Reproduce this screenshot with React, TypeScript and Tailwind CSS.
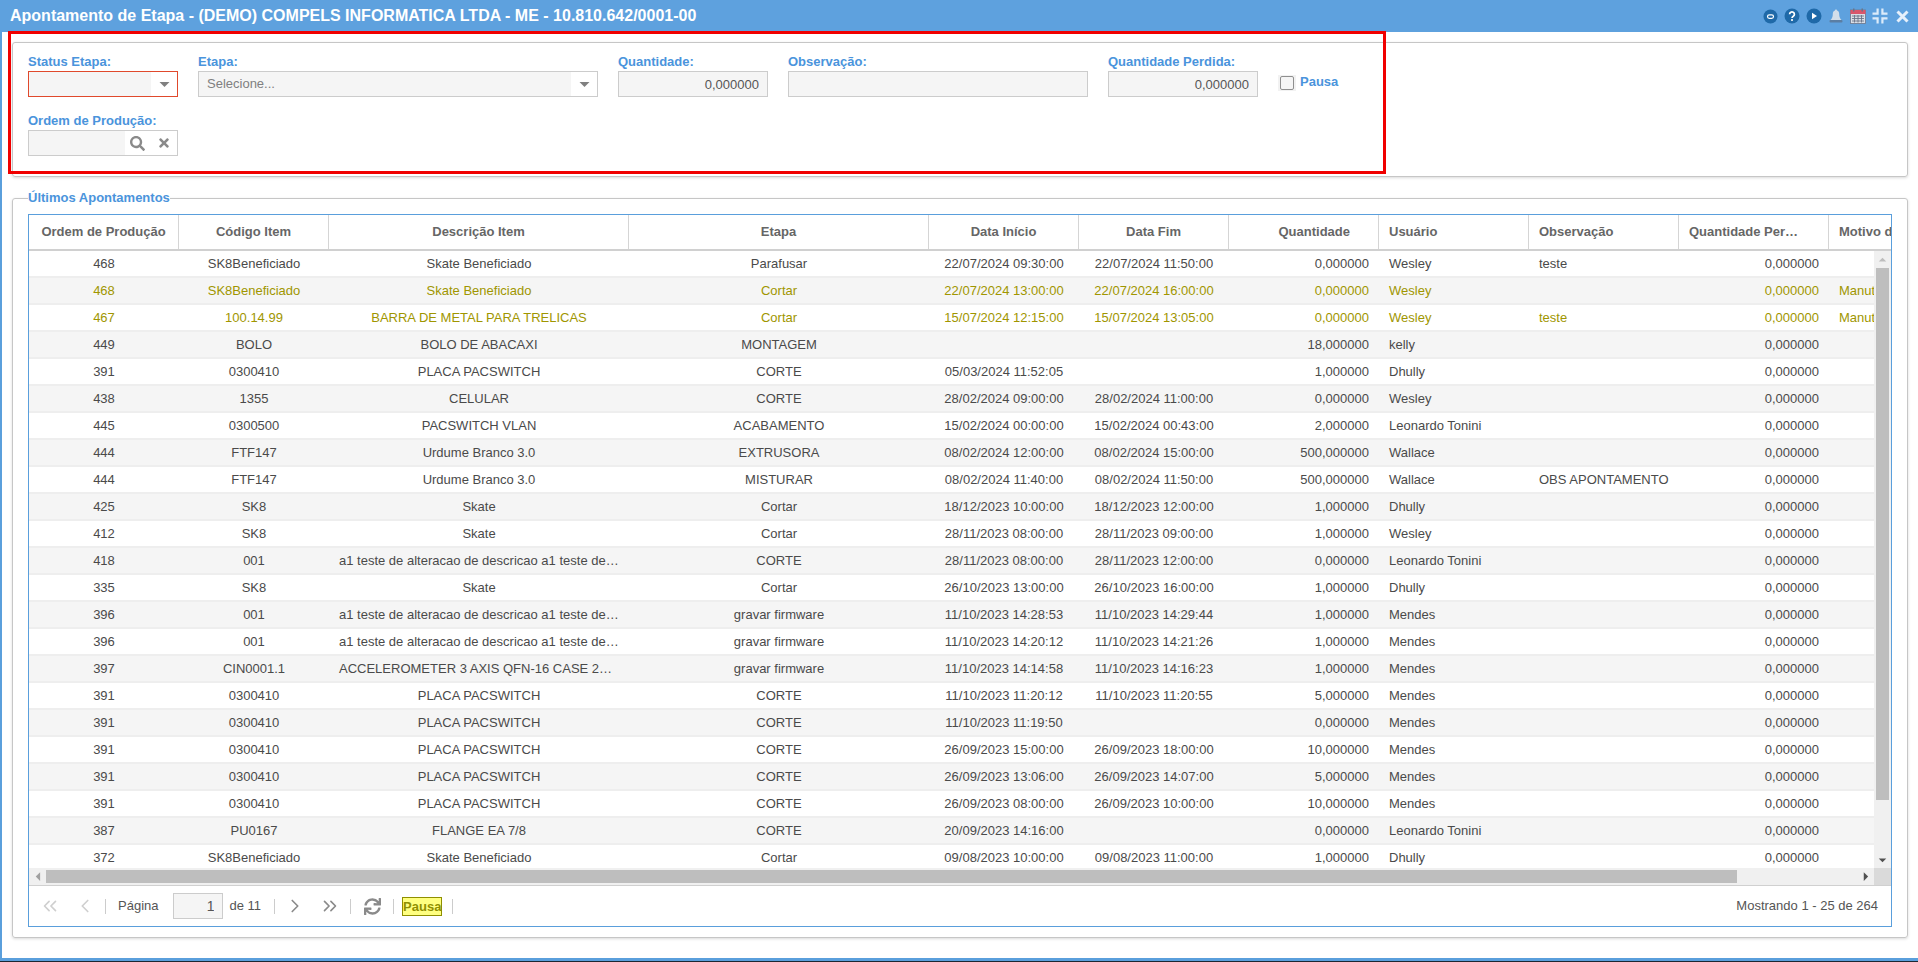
import React from "react";
import { ChevronLeft, ChevronRight, ChevronsLeft, ChevronsRight } from "lucide-react";
import { FaSearch, FaSync, FaTimes } from "react-icons/fa";

const longDesc = "a1 teste de alteracao de descricao a1 teste de alteracao de descricao";

// ordem, codigo, descricao, etapa, inicio, fim, qtd, usuario, obs, motivo, pausa
const rows: string[][] = [
  ["468", "SK8Beneficiado", "Skate Beneficiado", "Parafusar", "22/07/2024 09:30:00", "22/07/2024 11:50:00", "0,000000", "Wesley", "teste", "", ""],
  ["468", "SK8Beneficiado", "Skate Beneficiado", "Cortar", "22/07/2024 13:00:00", "22/07/2024 16:00:00", "0,000000", "Wesley", "", "Manutenção", "1"],
  ["467", "100.14.99", "BARRA DE METAL PARA TRELICAS", "Cortar", "15/07/2024 12:15:00", "15/07/2024 13:05:00", "0,000000", "Wesley", "teste", "Manutenção", "1"],
  ["449", "BOLO", "BOLO DE ABACAXI", "MONTAGEM", "", "", "18,000000", "kelly", "", "", ""],
  ["391", "0300410", "PLACA PACSWITCH", "CORTE", "05/03/2024 11:52:05", "", "1,000000", "Dhully", "", "", ""],
  ["438", "1355", "CELULAR", "CORTE", "28/02/2024 09:00:00", "28/02/2024 11:00:00", "0,000000", "Wesley", "", "", ""],
  ["445", "0300500", "PACSWITCH VLAN", "ACABAMENTO", "15/02/2024 00:00:00", "15/02/2024 00:43:00", "2,000000", "Leonardo Tonini", "", "", ""],
  ["444", "FTF147", "Urdume Branco 3.0", "EXTRUSORA", "08/02/2024 12:00:00", "08/02/2024 15:00:00", "500,000000", "Wallace", "", "", ""],
  ["444", "FTF147", "Urdume Branco 3.0", "MISTURAR", "08/02/2024 11:40:00", "08/02/2024 11:50:00", "500,000000", "Wallace", "OBS APONTAMENTO", "", ""],
  ["425", "SK8", "Skate", "Cortar", "18/12/2023 10:00:00", "18/12/2023 12:00:00", "1,000000", "Dhully", "", "", ""],
  ["412", "SK8", "Skate", "Cortar", "28/11/2023 08:00:00", "28/11/2023 09:00:00", "1,000000", "Wesley", "", "", ""],
  ["418", "001", longDesc, "CORTE", "28/11/2023 08:00:00", "28/11/2023 12:00:00", "0,000000", "Leonardo Tonini", "", "", ""],
  ["335", "SK8", "Skate", "Cortar", "26/10/2023 13:00:00", "26/10/2023 16:00:00", "1,000000", "Dhully", "", "", ""],
  ["396", "001", longDesc, "gravar firmware", "11/10/2023 14:28:53", "11/10/2023 14:29:44", "1,000000", "Mendes", "", "", ""],
  ["396", "001", longDesc, "gravar firmware", "11/10/2023 14:20:12", "11/10/2023 14:21:26", "1,000000", "Mendes", "", "", ""],
  ["397", "CIN0001.1", "ACCELEROMETER 3 AXIS QFN-16 CASE 2X2X1MM", "gravar firmware", "11/10/2023 14:14:58", "11/10/2023 14:16:23", "1,000000", "Mendes", "", "", ""],
  ["391", "0300410", "PLACA PACSWITCH", "CORTE", "11/10/2023 11:20:12", "11/10/2023 11:20:55", "5,000000", "Mendes", "", "", ""],
  ["391", "0300410", "PLACA PACSWITCH", "CORTE", "11/10/2023 11:19:50", "", "0,000000", "Mendes", "", "", ""],
  ["391", "0300410", "PLACA PACSWITCH", "CORTE", "26/09/2023 15:00:00", "26/09/2023 18:00:00", "10,000000", "Mendes", "", "", ""],
  ["391", "0300410", "PLACA PACSWITCH", "CORTE", "26/09/2023 13:06:00", "26/09/2023 14:07:00", "5,000000", "Mendes", "", "", ""],
  ["391", "0300410", "PLACA PACSWITCH", "CORTE", "26/09/2023 08:00:00", "26/09/2023 10:00:00", "10,000000", "Mendes", "", "", ""],
  ["387", "PU0167", "FLANGE EA 7/8", "CORTE", "20/09/2023 14:16:00", "", "0,000000", "Leonardo Tonini", "", "", ""],
  ["372", "SK8Beneficiado", "Skate Beneficiado", "Cortar", "09/08/2023 10:00:00", "09/08/2023 11:00:00", "1,000000", "Dhully", "", "", ""],
];

function Caret({ dir, className }: { dir: "up" | "down" | "left" | "right"; className: string }) {
  const points = {
    up: "0,6 5,1 10,6",
    down: "0,2 10,2 5,7",
    left: "7,0 7,10 2,5",
    right: "2,0 2,10 7,5",
  }[dir];
  return (
    <svg viewBox={dir === "left" || dir === "right" ? "0 0 8 10" : "0 0 10 8"} className={className}>
      <polygon points={points} fill="currentColor" />
    </svg>
  );
}

function TopIcons() {
  return (
    <div className="ml-auto flex items-center pr-[5px]">
      <div className="w-[22px] flex justify-center">
        <svg width="15" height="15" viewBox="0 0 15 15">
          <circle cx="7.5" cy="7.5" r="7" fill="#1f69a8" />
          <rect x="4.5" y="5.8" width="6" height="3.6" rx="1.8" fill="none" stroke="#fff" strokeWidth="1.2" />
        </svg>
      </div>
      <div className="w-[22px] flex justify-center">
        <svg width="16" height="16" viewBox="0 0 16 16">
          <circle cx="8" cy="8" r="7.5" fill="#1f69a8" />
          <path d="M5.6 6.2a2.4 2.3 0 1 1 3.7 2c-.9.6-1.3 1-1.3 1.9" fill="none" stroke="#fff" strokeWidth="1.7" />
          <rect x="7.1" y="11.1" width="1.8" height="1.8" fill="#fff" />
        </svg>
      </div>
      <div className="w-[22px] flex justify-center">
        <svg width="16" height="16" viewBox="0 0 16 16">
          <circle cx="8" cy="8" r="7.5" fill="#1f69a8" />
          <path d="M6 4.8 11 8l-5 3.2z" fill="#fff" />
        </svg>
      </div>
      <div className="w-[22px] flex justify-center">
        <svg width="14" height="15" viewBox="0 0 14 15">
          <path d="M7 0.5c.7 0 1 .5 1 1 1.6.5 2.2 1.8 2.2 3.5 0 3 .8 4.6 2.3 6H1.500c1.500-1.400 2.300-3 2.300-6 0-1.700.6-3 2.200-3.500 0-.5.3-1 1-1z" fill="#d3deea" />
          <rect x="0.5" y="11" width="13" height="2.500" rx="1" fill="#5b7ea3" />
        </svg>
      </div>
      <div className="w-[22px] flex justify-center">
        <svg width="16" height="16" viewBox="0 0 16 16">
          <rect x="0.500" y="2" width="15" height="13.500" fill="#d9dee6" stroke="#6b7488" strokeWidth="0.8" />
          <rect x="0.500" y="2" width="15" height="4" fill="#d9566b" />
          <rect x="3" y="0.500" width="1.500" height="3" fill="#6b7488" />
          <rect x="11.500" y="0.500" width="1.500" height="3" fill="#6b7488" />
          <path d="M2 8h12M2 10.500h12M2 13h12M4.500 7v7.500M8 7v7.500M11.500 7v7.500" stroke="#6b7488" strokeWidth="0.9" />
        </svg>
      </div>
      <div className="w-[22px] flex justify-center">
        <svg width="16" height="16" viewBox="0 0 16 16" fill="#dcebfa">
          <path d="M4.500 0.500h2.200v6.200H0.500V4.500h4z" />
          <path d="M9.300 0.500h2.200v4h4v2.200H9.300z" />
          <path d="M0.500 9.300h6.200v6.200H4.500v-4h-4z" />
          <path d="M9.300 9.300h6.200v2.200h-4v4H9.300z" />
        </svg>
      </div>
      <div className="w-[22px] flex justify-center">
        <svg width="13" height="13" viewBox="0 0 13 13">
          <path d="M1.500 1.500 11.500 11.500M11.500 1.500 1.500 11.500" stroke="#e6f0fb" strokeWidth="3" />
        </svg>
      </div>
    </div>
  );
}

function Field({ label, width, children }: { label: string; width: string; children: React.ReactNode }) {
  return (
    <div className={width}>
      <label className="block h-[18px] text-[13px] leading-[17px] font-bold text-[#4a94dc]">{label}</label>
      {children}
    </div>
  );
}

function ComboField({ text, borderClass }: { text: string; borderClass: string }) {
  return (
    <div className={"flex h-[26px] border bg-white " + borderClass}>
      <input readOnly value={text} className="min-w-0 flex-1 bg-[#f5f5f5] pl-2 text-[13px] text-[#808080] outline-none" />
      <div className="flex w-[26px] items-center justify-center">
        <Caret dir="down" className="h-[8px] w-[11px] text-[#808080]" />
      </div>
    </div>
  );
}

function NumberField({ value }: { value: string }) {
  return (
    <input
      readOnly
      value={value}
      className="block h-[26px] w-full border border-[#cccccc] bg-[#f5f5f5] pr-2 text-right text-[13px] text-[#555555] outline-none"
    />
  );
}

const headers = [
  { t: "Ordem de Produção", c: "w-[150px] text-center px-2" },
  { t: "Código Item", c: "w-[150px] text-center px-2" },
  { t: "Descrição Item", c: "w-[300px] text-center px-2" },
  { t: "Etapa", c: "w-[300px] text-center px-2" },
  { t: "Data Início", c: "w-[150px] text-center px-2" },
  { t: "Data Fim", c: "w-[150px] text-center px-2" },
  { t: "Quantidade", c: "w-[150px] text-right pl-2 pr-[28px]" },
  { t: "Usuário", c: "w-[150px] text-left px-[10px]" },
  { t: "Observação", c: "w-[150px] text-left px-[10px]" },
  { t: "Quantidade Perdida", c: "w-[150px] text-left pl-[10px] pr-[29px]" },
  { t: "Motivo da Pausa", c: "w-[150px] text-left px-[10px]" },
];

function Sep({ ml }: { ml: string }) {
  return <div className={"h-[15px] w-px shrink-0 bg-[#cccccc] " + ml} />;
}

function Grid() {
  return (
    <div className="flex h-[713px] min-w-0 flex-col border border-[#5a9fdc]">
      {/* header */}
      <div className="h-[36px] shrink-0 overflow-hidden border-b-2 border-[#d0d0d0]">
        <div className="flex h-full w-[1950px]">
          {headers.map((h) => (
            <div key={h.t} className={"shrink-0 truncate border-r border-[#d5d5d5] text-[13px] leading-[34px] font-bold text-[#666666] " + h.c}>
              {h.t}
            </div>
          ))}
        </div>
      </div>

      {/* body */}
      <div className="flex h-[617px] shrink-0">
        <div className="min-w-0 flex-1 overflow-hidden">
          {rows.map((r, i) => {
            const paused = r[10] === "1";
            return (
              <div
                key={i}
                className={
                  "flex h-[27px] w-[1950px] border-b-2 border-[#eeeeee] text-[13px] leading-[26px] " +
                  (i % 2 === 1 ? "bg-[#f5f5f5] " : "bg-white ") +
                  (paused ? "text-[#a09600]" : "text-[#4a4a4a]")
                }
              >
                <div className="w-[150px] shrink-0 truncate px-[10px] text-center">{r[0]}</div>
                <div className="w-[150px] shrink-0 truncate px-[10px] text-center">{r[1]}</div>
                <div className="w-[300px] shrink-0 truncate px-[10px] text-center">{r[2]}</div>
                <div className="w-[300px] shrink-0 truncate px-[10px] text-center">{r[3]}</div>
                <div className="w-[150px] shrink-0 truncate px-[10px] text-center">{r[4]}</div>
                <div className="w-[150px] shrink-0 truncate px-[10px] text-center">{r[5]}</div>
                <div className="w-[150px] shrink-0 truncate px-[10px] text-right">{r[6]}</div>
                <div className="w-[150px] shrink-0 truncate px-[10px]">{r[7]}</div>
                <div className="w-[150px] shrink-0 truncate px-[10px]">{r[8]}</div>
                <div className="w-[150px] shrink-0 truncate px-[10px] text-right">0,000000</div>
                <div className="w-[150px] shrink-0 truncate px-[10px]">{r[9]}</div>
              </div>
            );
          })}
        </div>
        <div className="flex w-[17px] shrink-0 flex-col bg-[#f0f0f0]">
          <div className="flex h-[17px] items-center justify-center">
            <Caret dir="up" className="h-[6px] w-[9px] text-[#bdbdbd]" />
          </div>
          <div className="mx-[2px] h-[532px] bg-[#bebebe]" />
          <div className="mt-auto flex h-[17px] items-center justify-center">
            <Caret dir="down" className="h-[6px] w-[9px] text-[#505050]" />
          </div>
        </div>
      </div>

      {/* horizontal scrollbar */}
      <div className="flex h-[17px] shrink-0 bg-[#f0f0f0]">
        <div className="flex w-[17px] items-center justify-center">
          <Caret dir="left" className="h-[9px] w-[7px] text-[#a0a0a0]" />
        </div>
        <div className="my-[2px] w-[1691px] bg-[#bebebe]" />
        <div className="ml-auto flex w-[17px] items-center justify-center">
          <Caret dir="right" className="h-[9px] w-[7px] text-[#505050]" />
        </div>
        <div className="w-[17px] bg-[#dadada]" />
      </div>

      {/* paging toolbar */}
      <div className="flex h-[41px] shrink-0 items-center border-t border-[#d0d0d0] text-[13px] text-[#555555]">
        <ChevronsLeft size={22} strokeWidth={1.8} className="ml-[10px] shrink-0 text-[#cfcfcf]" />
        <ChevronLeft size={22} strokeWidth={1.8} className="ml-[13px] shrink-0 text-[#cfcfcf]" />
        <Sep ml="ml-[9px]" />
        <span className="ml-[12px]">Página</span>
        <input
          readOnly
          value="1"
          className="ml-[15px] h-[26px] w-[50px] border border-[#cccccc] bg-[#f5f5f5] pr-2 text-right text-[14px] text-[#555555] outline-none"
        />
        <span className="ml-[6px]">de 11</span>
        <Sep ml="ml-[13px]" />
        <ChevronRight size={22} strokeWidth={1.8} className="ml-[9px] shrink-0 text-[#8a8a8a]" />
        <ChevronsRight size={22} strokeWidth={1.8} className="ml-[13px] shrink-0 text-[#8a8a8a]" />
        <Sep ml="ml-[9px]" />
        <FaSync size={17} className="ml-[13px] shrink-0 text-[#8a8a8a]" />
        <Sep ml="ml-[12px]" />
        <span className="ml-[8px] h-[19px] w-[40px] shrink-0 border border-[#8f8f00] bg-[#ffff80] text-center text-[13px] leading-[17px] font-bold text-[#8f8f00]">
          Pausa
        </span>
        <Sep ml="ml-[10px]" />
        <span className="ml-auto pr-[13px]">Mostrando 1 - 25 de 264</span>
      </div>
    </div>
  );
}

export default function App() {
  return (
    <div className="relative flex h-[962px] flex-col overflow-hidden bg-white font-['Liberation_Sans',Arial,sans-serif]">
      <div className="flex h-[32px] shrink-0 items-center bg-[#5ea1de] pl-[10px] text-[16px] font-bold text-white">
        Apontamento de Etapa - (DEMO) COMPELS INFORMATICA LTDA - ME - 10.810.642/0001-00
        <TopIcons />
      </div>

      <div className="min-h-0 flex-1 border-b-[3px] border-l-2 border-[#5a9fdc] pl-[10px] pr-[10px] pt-[10px]">
        {/* form */}
        <div className="h-[135px] rounded-[3px] border border-[#c6c6c6] pl-[15px] pt-[10px] shadow-[0_1px_3px_rgba(0,0,0,0.15)]">
          <div className="flex gap-5">
            <Field label="Status Etapa:" width="w-[150px]">
              <ComboField text="" borderClass="border-[#e0492c]" />
            </Field>
            <Field label="Etapa:" width="w-[400px]">
              <ComboField text="Selecione..." borderClass="border-[#cccccc]" />
            </Field>
            <Field label="Quantidade:" width="w-[150px]">
              <NumberField value="0,000000" />
            </Field>
            <Field label="Observação:" width="w-[300px]">
              <NumberField value="" />
            </Field>
            <Field label="Quantidade Perdida:" width="w-[150px]">
              <NumberField value="0,000000" />
            </Field>
            <div className="flex items-start gap-[4px] pt-[22px]">
              <div className="flex h-[16px] w-[18px] items-center justify-center bg-[#f2f2f2]">
                <div className="h-[14px] w-[14px] rounded-[2px] border border-[#8f8f8f] bg-[#f5f5f5]" />
              </div>
              <span className="text-[13px] leading-[14px] font-bold text-[#4a94dc]">Pausa</span>
            </div>
          </div>
          <div className="mt-[15px]">
            <Field label="Ordem de Produção:" width="w-[150px]">
              <div className="flex h-[26px] border border-[#cccccc] bg-white">
                <input readOnly value="" className="w-[96px] bg-[#f5f5f5] outline-none" />
                <div className="flex flex-1 items-center justify-between pl-[5px] pr-[6px] text-[#8a8a8a]">
                  <FaSearch size={15} />
                  <FaTimes size={14} />
                </div>
              </div>
            </Field>
          </div>
        </div>

        {/* grid */}
        <fieldset className="mt-[13px] h-[748px] min-w-0 rounded-[3px] border border-[#c6c6c6] pb-[11px] pl-[15px] pr-[15px] pt-[8px] shadow-[0_1px_3px_rgba(0,0,0,0.15)]">
          <legend className="text-[13px] leading-[16px] font-bold text-[#4a94dc]">Últimos Apontamentos</legend>
          <Grid />
        </fieldset>
      </div>
      <div className="h-px shrink-0 bg-[#1c2733]" />

      {/* red highlight drawn over the form */}
      <div className="pointer-events-none absolute left-[8px] top-[31px] h-[143px] w-[1378px] border-[3px] border-[#f00000]" />
    </div>
  );
}
